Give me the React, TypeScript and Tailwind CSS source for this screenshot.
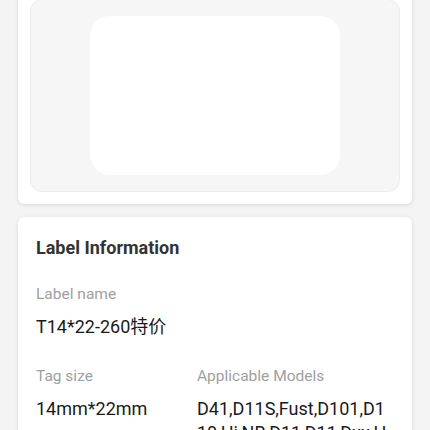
import React from 'react';

const font = { fontFamily: 'Roboto, "Noto Sans CJK SC", sans-serif' };

function Field({ label, value }: { label: string; value: string }) {
  return (
    <div className="flex flex-col">
      <div className="text-[15.5px] leading-[20px] text-[#a0a0a0]">{label}</div>
      <div className="mt-[11px] text-[18px] leading-[24px] text-[#1a1a1a] break-all">{value}</div>
    </div>
  );
}

export default function App() {
  return (
    <div style={font} className="h-[430px] overflow-hidden bg-[#f4f4f4] px-[18px]">
      {/* preview card, scrolled partly out of view */}
      <div className="-mt-[13px] rounded-md bg-white p-3 shadow-[0_1px_4px_rgba(0,0,0,0.12)]">
        <div className="flex h-[193px] items-center justify-center rounded-xl border border-[#ececec] bg-[#f6f6f6]">
          <div className="h-[159px] w-[250px] rounded-[20px] bg-white" />
        </div>
      </div>

      <div className="mt-[13px] rounded-md bg-white pl-[18px] pr-[20px] pt-[19px] pb-4 shadow-[0_1px_4px_rgba(0,0,0,0.12)]">
        <h2 className="text-[18px] font-bold leading-[24px] text-[#333333]">Label Information</h2>

        <div className="mt-[24px]">
          <Field label="Label name" value="T14*22-260特价" />
        </div>

        <div className="mt-[27px] flex">
          <div className="w-[161px] shrink-0">
            <Field label="Tag size" value="14mm*22mm" />
          </div>
          <div className="min-w-0 flex-1">
            <Field label="Applicable Models" value="D41,D11S,Fust,D101,D110,Hi,NB,D11,D11,Dxx,H1S" />
          </div>
        </div>
      </div>
    </div>
  );
}
